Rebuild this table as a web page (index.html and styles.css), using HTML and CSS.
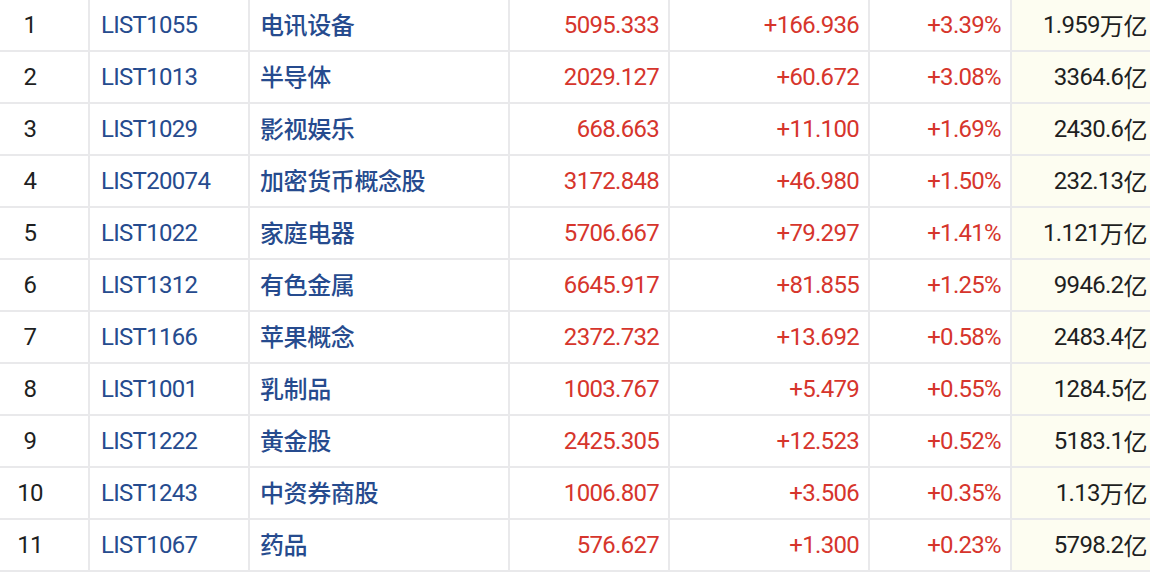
FILE: index.html
```html
<!DOCTYPE html>
<html lang="zh-CN">
<head>
<meta charset="utf-8">
<title>板块行情</title>
<link rel="stylesheet" href="styles.css">
</head>
<body>
<div class="table">
  <div class="row"><div class="cell rank">1</div><div class="cell code">LIST1055</div><div class="cell name">电讯设备</div><div class="cell num up">5095.333</div><div class="cell num up">+166.936</div><div class="cell num up">+3.39%</div><div class="cell cap">1.959<span class="unit">万亿</span></div></div>
  <div class="row"><div class="cell rank">2</div><div class="cell code">LIST1013</div><div class="cell name">半导体</div><div class="cell num up">2029.127</div><div class="cell num up">+60.672</div><div class="cell num up">+3.08%</div><div class="cell cap">3364.6<span class="unit">亿</span></div></div>
  <div class="row"><div class="cell rank">3</div><div class="cell code">LIST1029</div><div class="cell name">影视娱乐</div><div class="cell num up">668.663</div><div class="cell num up">+11.100</div><div class="cell num up">+1.69%</div><div class="cell cap">2430.6<span class="unit">亿</span></div></div>
  <div class="row"><div class="cell rank">4</div><div class="cell code">LIST20074</div><div class="cell name">加密货币概念股</div><div class="cell num up">3172.848</div><div class="cell num up">+46.980</div><div class="cell num up">+1.50%</div><div class="cell cap">232.13<span class="unit">亿</span></div></div>
  <div class="row"><div class="cell rank">5</div><div class="cell code">LIST1022</div><div class="cell name">家庭电器</div><div class="cell num up">5706.667</div><div class="cell num up">+79.297</div><div class="cell num up">+1.41%</div><div class="cell cap">1.121<span class="unit">万亿</span></div></div>
  <div class="row"><div class="cell rank">6</div><div class="cell code">LIST1312</div><div class="cell name">有色金属</div><div class="cell num up">6645.917</div><div class="cell num up">+81.855</div><div class="cell num up">+1.25%</div><div class="cell cap">9946.2<span class="unit">亿</span></div></div>
  <div class="row"><div class="cell rank">7</div><div class="cell code">LIST1166</div><div class="cell name">苹果概念</div><div class="cell num up">2372.732</div><div class="cell num up">+13.692</div><div class="cell num up">+0.58%</div><div class="cell cap">2483.4<span class="unit">亿</span></div></div>
  <div class="row"><div class="cell rank">8</div><div class="cell code">LIST1001</div><div class="cell name">乳制品</div><div class="cell num up">1003.767</div><div class="cell num up">+5.479</div><div class="cell num up">+0.55%</div><div class="cell cap">1284.5<span class="unit">亿</span></div></div>
  <div class="row"><div class="cell rank">9</div><div class="cell code">LIST1222</div><div class="cell name">黄金股</div><div class="cell num up">2425.305</div><div class="cell num up">+12.523</div><div class="cell num up">+0.52%</div><div class="cell cap">5183.1<span class="unit">亿</span></div></div>
  <div class="row"><div class="cell rank">10</div><div class="cell code">LIST1243</div><div class="cell name">中资券商股</div><div class="cell num up">1006.807</div><div class="cell num up">+3.506</div><div class="cell num up">+0.35%</div><div class="cell cap">1.13<span class="unit">万亿</span></div></div>
  <div class="row"><div class="cell rank">11</div><div class="cell code">LIST1067</div><div class="cell name">药品</div><div class="cell num up">576.627</div><div class="cell num up">+1.300</div><div class="cell num up">+0.23%</div><div class="cell cap">5798.2<span class="unit">亿</span></div></div>
</div>
</body>
</html>
```

FILE: styles.css
```css
html, body {
  margin: 0;
  padding: 0;
  background: #ffffff;
}

body {
  font-family: Roboto, "Noto Sans CJK SC", sans-serif;
  font-size: 24px;
  font-weight: 400;
  letter-spacing: -0.7px;
  color: #1e1f22;
  overflow: hidden;
}

.table {
  width: 1150px;
}

.row {
  display: grid;
  grid-template-columns: 90px 160px 260px 160px 200px 142px 1fr;
  height: 52px;
  border-bottom: 2px solid #e9e9eb;
  box-sizing: border-box;
}

.cell {
  display: flex;
  align-items: center;
  box-sizing: border-box;
  border-right: 2px solid #e9e9eb;
  padding: 0 10px 0 11px;
  white-space: nowrap;
  font-variant-numeric: tabular-nums;
}

.rank {
  justify-content: center;
  padding: 0 28px 0 0;
  color: #1e1f22;
}

.code {
  color: #264b8e;
}

.name {
  font-family: "Noto Sans CJK SC", sans-serif;
  font-size: 24px;
  font-weight: 500;
  letter-spacing: -0.4px;
  color: #264b8e;
  padding-left: 10px;
  padding-bottom: 3px;
}

.num {
  justify-content: flex-end;
  padding-right: 9px;
}

.up {
  color: #d6352c;
}

.cap {
  justify-content: flex-end;
  border-right: none;
  background: #fdfdf1;
  padding-right: 3px;
  color: #1e1f22;
}

.unit {
  font-family: "Noto Sans CJK SC", sans-serif;
  font-size: 24px;
  font-weight: 400;
  letter-spacing: -0.4px;
  position: relative;
  top: -1px;
}
```
